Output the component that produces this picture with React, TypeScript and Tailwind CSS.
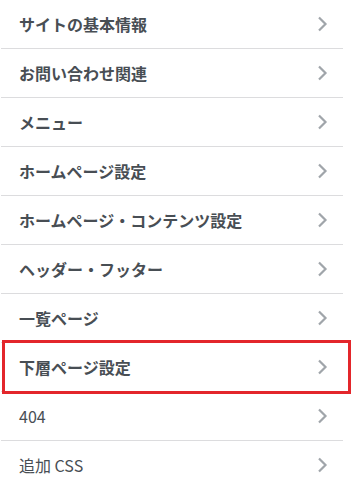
const items = [
  { label: "サイトの基本情報", bold: true },
  { label: "お問い合わせ関連", bold: true },
  { label: "メニュー", bold: true },
  { label: "ホームページ設定", bold: true },
  { label: "ホームページ・コンテンツ設定", bold: true },
  { label: "ヘッダー・フッター", bold: true },
  { label: "一覧ページ", bold: true },
  { label: "下層ページ設定", bold: true, marked: true },
  { label: "404", bold: false },
  { label: "追加 CSS", bold: false },
];

function Chevron() {
  return (
    <svg width="11" height="16" viewBox="0 0 11 16" className="shrink-0">
      <path d="M2 1.5 L8.5 8 L2 14.5" fill="none" stroke="#a0a5aa" strokeWidth="2.2" />
    </svg>
  );
}

export default function App() {
  return (
    <div
      className="w-[351px] h-[487px] bg-white overflow-hidden"
      style={{ fontFamily: "'Noto Sans CJK JP', 'Noto Sans', sans-serif" }}>
      <ul className="w-[342px] ml-[1px]">
        {items.map((item, i) => (
          <li key={i} className="relative border-b border-[#dcdcde] last:border-b-0">
            <div className="h-[48px] flex items-center justify-between pl-[18px] pr-[15px]">
              <span
                className={`text-[16px] text-[#484e54] ${item.bold ? "font-bold" : "font-normal"}`}>
                {item.label}
              </span>
              <Chevron />
            </div>
            {item.marked && (
              <div className="absolute left-[1px] -top-[3px] w-[349px] h-[54px] border-[3px] border-[#e3262b] pointer-events-none" />
            )}
          </li>
        ))}
      </ul>
    </div>
  );
}
